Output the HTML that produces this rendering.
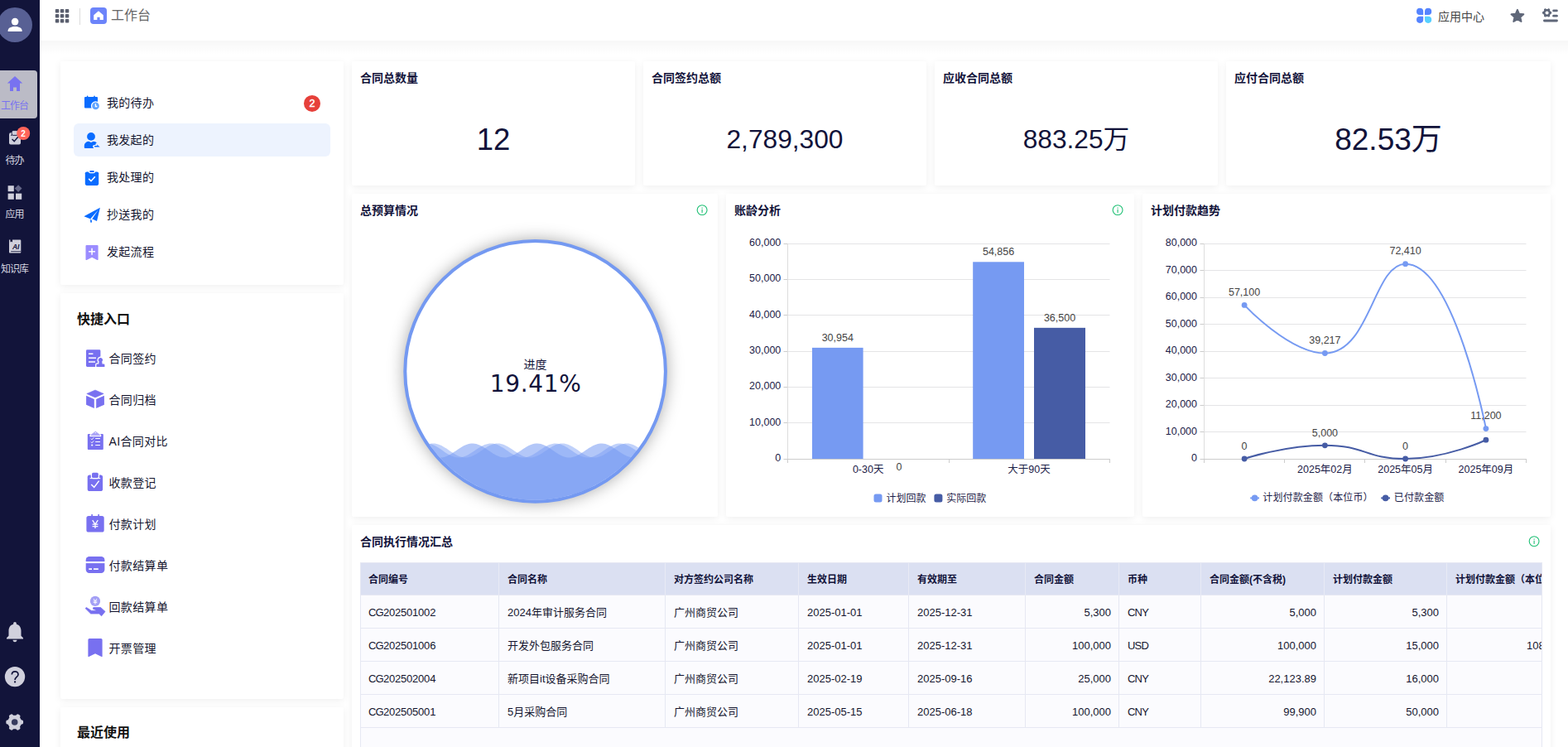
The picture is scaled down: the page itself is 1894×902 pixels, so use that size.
<!DOCTYPE html>
<html lang="zh-CN">
<head>
<meta charset="utf-8">
<title>工作台</title>
<style>
*{box-sizing:border-box;margin:0;padding:0}
html,body{width:1894px;height:902px;overflow:hidden}
body{background:#fff;font-family:"Liberation Sans","Noto Sans CJK SC",sans-serif;color:#12133a;font-size:14px;position:relative;-webkit-font-smoothing:antialiased}
.abs{position:absolute}
#side{position:absolute;left:0;top:0;width:48px;height:902px;background:#12143a;overflow:hidden;z-index:5}
#top{position:absolute;left:48px;top:0;width:1846px;height:49px;background:#fff;z-index:4}
#topsh{position:absolute;left:49px;top:49px;width:1845px;height:17px;background:linear-gradient(to bottom,rgba(0,0,0,.033),rgba(0,0,0,.014) 50%,rgba(0,0,0,0));z-index:3}
.card{position:absolute;background:#fff;border-radius:2px;box-shadow:0 2px 10px rgba(0,0,0,.068)}
.ct{position:absolute;left:10px;top:10px;font-size:14px;font-weight:bold;line-height:20px;color:#12133a;white-space:nowrap}
.big{position:absolute;left:0;right:0;text-align:center;white-space:nowrap;color:#12133a;line-height:40px}
.mi{position:absolute;left:16px;width:310px;height:40px;border-radius:6px;font-size:14px;line-height:40px;color:#14152e;white-space:nowrap}
.mi span{position:absolute;left:40px;top:0;letter-spacing:.3px}
.mi svg{position:absolute;overflow:visible}
.qi{position:absolute;left:30px;height:30px;font-size:14px;line-height:30px;color:#14152e;white-space:nowrap}
.qi span{position:absolute;left:28.5px;top:0;letter-spacing:.35px}
.qi svg{position:absolute;overflow:visible}
.h16{position:absolute;left:20px;font-size:16px;font-weight:bold;line-height:24px;color:#111;white-space:nowrap}
.sl{position:absolute;left:-12px;width:60px;text-align:center;font-size:12px;letter-spacing:-1px;line-height:14px;color:#d6d6e0;white-space:nowrap;text-indent:-1px}
svg{display:block}
svg text{font-family:"Liberation Sans","Noto Sans CJK SC",sans-serif}
.tbl{position:absolute;left:10px;top:45px;width:1428px;height:240px;background:#fbfbfe;overflow:hidden;border-left:1px solid #e6e8f3;border-right:1px solid #e6e8f3;border-top:1px solid #e6e8f3}
.th{position:absolute;top:0;height:39px;background:#dbe0f2;border-right:1px solid #e8eaf5;border-bottom:1px solid #e6e8f3;font-size:12px;font-weight:bold;line-height:38px;padding:1px 0 0 10px;color:#12133a;white-space:nowrap;overflow:hidden}
.td{position:absolute;height:40px;border-right:1px solid #e6e8f3;border-bottom:1px solid #e6e8f3;font-size:13px;line-height:39px;padding:1px 9px 0 10px;color:#14152e;white-space:nowrap;overflow:hidden}
.c0{padding-left:9px}
.td.c0{letter-spacing:-.2px}
.u{letter-spacing:-.8px}
.r{text-align:right}
</style>
</head>
<body>
<div id="side">
<svg class="abs" style="left:0;top:0" width="48" height="902" viewBox="0 0 48 902">
<circle cx="18" cy="30" r="21" fill="#586094"/>
<circle cx="18.1" cy="26.1" r="4.3" fill="#fff"/>
<path d="M9.6 38.1 V36.8 C9.6 33.6 14 32 18.1 32 C22.2 32 26.6 33.6 26.6 36.8 V38.1 Z" fill="#fff"/>
<path d="M0 85 H41 A4 4 0 0 1 45 89 V139 A4 4 0 0 1 41 143 H0 Z" fill="#bbbbc6"/>
<path d="M18 92 L27.2 100.6 H24 V110 H20 V105.6 H16 V110 H12 V100.6 H8.8 Z" fill="#7872f0"/>
<!-- todo -->
<rect x="11" y="160.2" width="14" height="14.4" rx="2" fill="#cdceda"/>
<rect x="14.3" y="157.8" width="7.4" height="5.6" rx="1.6" fill="#cdceda" stroke="#12143a" stroke-width="0.9"/>
<rect x="14.8" y="158.3" width="6.4" height="3.6" rx="1.2" fill="#cdceda"/>
<path d="M13 163.3 H14.6" stroke="#12143a" stroke-width="0.9" fill="none"/>
<path d="M14.6 168 L17.2 170.6 L21.8 165.2" stroke="#12143a" stroke-width="1.4" fill="none"/>
<circle cx="28.2" cy="161" r="8" fill="#ff6459"/>
<text x="28.1" y="164.6" font-size="10" font-weight="bold" fill="#fff" text-anchor="middle">2</text>
<!-- apps -->
<rect x="9.6" y="224.2" width="7.2" height="7" fill="#d0d0dc"/>
<rect x="9.6" y="233.6" width="7.2" height="7.2" fill="#d0d0dc"/>
<rect x="19" y="233.6" width="7.2" height="7.2" fill="#d0d0dc"/>
<path d="M22.1 223.2 L26.5 227.6 L22.1 232 L17.7 227.6 Z" fill="#646687"/>
<!-- knowledge -->
<path d="M11 289.6 H12.4 V292.6 L13.7 291.6 L15 292.6 V289.6 H24.4 A0.9 0.9 0 0 1 25.3 290.5 V304.6 A0.9 0.9 0 0 1 24.4 305.5 H11.9 A0.9 0.9 0 0 1 11 304.6 Z" fill="#d0d0dc"/>
<path d="M13.2 303.6 H25.3" stroke="#12143a" stroke-width="0.8" fill="none"/>
<text x="19.2" y="301.3" font-size="8.6" font-weight="bold" font-style="italic" fill="#12143a" text-anchor="middle">AI</text>
<!-- bell -->
<g transform="translate(3,747.8) scale(1.25)" fill="#d0d0dc"><path d="M12 22c1.1 0 2-.9 2-2h-4c0 1.1.89 2 2 2zm6-6v-5c0-3.07-1.64-5.64-4.5-6.32V4c0-.83-.67-1.5-1.5-1.5s-1.5.67-1.5 1.5v.68C7.63 5.36 6 7.92 6 11v5l-2 2v1h16v-1l-2-2z"/></g>
<!-- help -->
<circle cx="18" cy="817.1" r="12.2" fill="#d0d0dc"/>
<path d="M14.3 814.6 C14.3 809.6 22 809.6 22 814.4 C22 817.4 18.1 817.6 18.1 821" stroke="#12143a" stroke-width="1.7" fill="none"/>
<rect x="17.1" y="822.4" width="2" height="2" fill="#12143a"/>
<!-- gear -->
<path d="M28.10 872.00 L28.10 872.27 L28.08 872.54 L28.06 872.82 L28.03 873.09 L27.99 873.35 L27.92 873.62 L27.80 873.87 L27.60 874.10 L27.24 874.29 L26.73 874.42 L26.22 874.52 L25.86 874.65 L25.64 874.81 L25.50 874.99 L25.39 875.19 L25.29 875.38 L25.20 875.58 L25.10 875.77 L24.99 875.96 L24.89 876.15 L24.78 876.34 L24.66 876.52 L24.54 876.70 L24.42 876.89 L24.30 877.07 L24.19 877.26 L24.11 877.47 L24.08 877.74 L24.15 878.12 L24.31 878.61 L24.45 879.12 L24.47 879.52 L24.37 879.81 L24.21 880.04 L24.02 880.23 L23.81 880.40 L23.59 880.57 L23.36 880.72 L23.13 880.87 L22.90 881.01 L22.66 881.14 L22.42 881.26 L22.18 881.38 L21.93 881.49 L21.67 881.59 L21.41 881.66 L21.13 881.69 L20.83 881.62 L20.49 881.41 L20.12 881.03 L19.77 880.64 L19.48 880.39 L19.24 880.28 L19.01 880.25 L18.79 880.25 L18.57 880.27 L18.35 880.28 L18.13 880.29 L17.92 880.30 L17.70 880.30 L17.48 880.30 L17.27 880.29 L17.05 880.28 L16.83 880.27 L16.61 880.25 L16.39 880.25 L16.16 880.28 L15.92 880.39 L15.63 880.64 L15.28 881.03 L14.91 881.41 L14.57 881.62 L14.27 881.69 L13.99 881.66 L13.73 881.59 L13.47 881.49 L13.22 881.38 L12.98 881.26 L12.74 881.14 L12.50 881.01 L12.27 880.87 L12.04 880.72 L11.81 880.57 L11.59 880.40 L11.38 880.23 L11.19 880.04 L11.03 879.81 L10.93 879.52 L10.95 879.12 L11.09 878.61 L11.25 878.12 L11.32 877.74 L11.29 877.47 L11.21 877.26 L11.10 877.07 L10.98 876.89 L10.86 876.70 L10.74 876.52 L10.62 876.34 L10.51 876.15 L10.41 875.96 L10.30 875.77 L10.20 875.58 L10.11 875.38 L10.01 875.19 L9.90 874.99 L9.76 874.81 L9.54 874.65 L9.18 874.52 L8.67 874.42 L8.16 874.29 L7.80 874.10 L7.60 873.87 L7.48 873.62 L7.41 873.35 L7.37 873.09 L7.34 872.82 L7.32 872.54 L7.30 872.27 L7.30 872.00 L7.30 871.73 L7.32 871.46 L7.34 871.18 L7.37 870.91 L7.41 870.65 L7.48 870.38 L7.60 870.13 L7.80 869.90 L8.16 869.71 L8.67 869.58 L9.18 869.48 L9.54 869.35 L9.76 869.19 L9.90 869.01 L10.01 868.81 L10.11 868.62 L10.20 868.42 L10.30 868.23 L10.41 868.04 L10.51 867.85 L10.62 867.66 L10.74 867.48 L10.86 867.30 L10.98 867.11 L11.10 866.93 L11.21 866.74 L11.29 866.53 L11.32 866.26 L11.25 865.88 L11.09 865.39 L10.95 864.88 L10.93 864.48 L11.03 864.19 L11.19 863.96 L11.38 863.77 L11.59 863.60 L11.81 863.43 L12.04 863.28 L12.27 863.13 L12.50 862.99 L12.74 862.86 L12.98 862.74 L13.22 862.62 L13.47 862.51 L13.73 862.41 L13.99 862.34 L14.27 862.31 L14.57 862.38 L14.91 862.59 L15.28 862.97 L15.63 863.36 L15.92 863.61 L16.16 863.72 L16.39 863.75 L16.61 863.75 L16.83 863.73 L17.05 863.72 L17.27 863.71 L17.48 863.70 L17.70 863.70 L17.92 863.70 L18.13 863.71 L18.35 863.72 L18.57 863.73 L18.79 863.75 L19.01 863.75 L19.24 863.72 L19.48 863.61 L19.77 863.36 L20.12 862.97 L20.49 862.59 L20.83 862.38 L21.13 862.31 L21.41 862.34 L21.67 862.41 L21.93 862.51 L22.18 862.62 L22.42 862.74 L22.66 862.86 L22.90 862.99 L23.13 863.13 L23.36 863.28 L23.59 863.43 L23.81 863.60 L24.02 863.77 L24.21 863.96 L24.37 864.19 L24.47 864.48 L24.45 864.88 L24.31 865.39 L24.15 865.88 L24.08 866.26 L24.11 866.53 L24.19 866.74 L24.30 866.93 L24.42 867.11 L24.54 867.30 L24.66 867.48 L24.78 867.66 L24.89 867.85 L24.99 868.04 L25.10 868.23 L25.20 868.42 L25.29 868.62 L25.39 868.81 L25.50 869.01 L25.64 869.19 L25.86 869.35 L26.22 869.48 L26.73 869.58 L27.24 869.71 L27.60 869.90 L27.80 870.13 L27.92 870.38 L27.99 870.65 L28.03 870.91 L28.06 871.18 L28.08 871.46 L28.10 871.73 Z" fill="#d0d0dc"/><circle cx="17.70" cy="872.00" r="3.80" fill="#363a5e"/>
</svg>
<div class="sl" style="top:121px;color:#7872f0">工作台</div>
<div class="sl" style="top:187px">待办</div>
<div class="sl" style="top:252px">应用</div>
<div class="sl" style="top:318px">知识库</div>
</div>
<div id="top">
<svg class="abs" style="left:0;top:0" width="1846" height="49" viewBox="48 0 1846 49">
<g fill="#5a5f6e">
<rect x="66.8" y="11.0" width="4.5" height="4.4" rx="0.9"/><rect x="72.8" y="11.0" width="4.5" height="4.4" rx="0.9"/><rect x="78.8" y="11.0" width="4.5" height="4.4" rx="0.9"/>
<rect x="66.8" y="17.0" width="4.5" height="4.4" rx="0.9"/><rect x="72.8" y="17.0" width="4.5" height="4.4" rx="0.9"/><rect x="78.8" y="17.0" width="4.5" height="4.4" rx="0.9"/>
<rect x="66.8" y="23.0" width="4.5" height="4.4" rx="0.9"/><rect x="72.8" y="23.0" width="4.5" height="4.4" rx="0.9"/><rect x="78.8" y="23.0" width="4.5" height="4.4" rx="0.9"/>
</g>
<rect x="96" y="10" width="1" height="20" fill="#dcdcdc"/>
<rect x="109" y="9" width="20" height="20" rx="4" fill="#6c84fa"/>
<path d="M119 13.3 L124.8 18.3 V24 H120.6 V20.8 H117.4 V24 H113.2 V18.3 Z" fill="#fff"/>
<!-- app center -->
<path d="M1715.10 9.80 H1715.10 A4.10 4.10 0 0 1 1719.20 13.90 V17.40 A0.60 0.60 0 0 1 1718.60 18.00 H1715.10 A4.10 4.10 0 0 1 1711.00 13.90 V13.90 A4.10 4.10 0 0 1 1715.10 9.80 Z" fill="#5584ff"/>
<path d="M1725.10 9.80 H1725.10 A4.10 4.10 0 0 1 1729.20 13.90 V13.90 A4.10 4.10 0 0 1 1725.10 18.00 H1721.60 A0.60 0.60 0 0 1 1721.00 17.40 V13.90 A4.10 4.10 0 0 1 1725.10 9.80 Z" fill="#5584ff"/>
<path d="M1715.10 19.70 H1718.60 A0.60 0.60 0 0 1 1719.20 20.30 V23.80 A4.10 4.10 0 0 1 1715.10 27.90 H1715.10 A4.10 4.10 0 0 1 1711.00 23.80 V23.80 A4.10 4.10 0 0 1 1715.10 19.70 Z" fill="#5584ff"/>
<path d="M1721.60 19.70 H1725.10 A4.10 4.10 0 0 1 1729.20 23.80 V23.80 A4.10 4.10 0 0 1 1725.10 27.90 H1725.10 A4.10 4.10 0 0 1 1721.00 23.80 V20.30 A0.60 0.60 0 0 1 1721.60 19.70 Z" fill="#57d0ff"/>
<!-- star -->
<path d="M1832.90 11.90 L1835.02 16.79 L1840.32 17.29 L1836.32 20.81 L1837.48 26.01 L1832.90 23.30 L1828.32 26.01 L1829.48 20.81 L1825.48 17.29 L1830.78 16.79 Z" fill="#5f6779" stroke="#5f6779" stroke-width="2" stroke-linejoin="round"/>
<!-- settings list -->
<path d="M1874.20 15.40 L1874.20 15.55 L1874.19 15.69 L1874.18 15.84 L1874.16 15.98 L1874.14 16.13 L1874.10 16.27 L1874.04 16.41 L1873.93 16.53 L1873.75 16.64 L1873.48 16.71 L1873.21 16.77 L1873.02 16.84 L1872.90 16.92 L1872.83 17.02 L1872.77 17.13 L1872.72 17.23 L1872.66 17.34 L1872.61 17.44 L1872.55 17.55 L1872.50 17.65 L1872.44 17.75 L1872.37 17.85 L1872.31 17.95 L1872.25 18.05 L1872.18 18.15 L1872.12 18.25 L1872.07 18.36 L1872.05 18.51 L1872.09 18.71 L1872.17 18.97 L1872.24 19.24 L1872.25 19.45 L1872.19 19.61 L1872.11 19.73 L1872.00 19.83 L1871.89 19.93 L1871.77 20.01 L1871.65 20.10 L1871.53 20.17 L1871.40 20.25 L1871.27 20.32 L1871.14 20.39 L1871.01 20.45 L1870.88 20.51 L1870.74 20.56 L1870.60 20.60 L1870.45 20.62 L1870.29 20.59 L1870.10 20.47 L1869.91 20.28 L1869.72 20.08 L1869.57 19.95 L1869.43 19.89 L1869.31 19.87 L1869.19 19.87 L1869.07 19.88 L1868.95 19.89 L1868.84 19.89 L1868.72 19.90 L1868.60 19.90 L1868.48 19.90 L1868.36 19.89 L1868.25 19.89 L1868.13 19.88 L1868.01 19.87 L1867.89 19.87 L1867.77 19.89 L1867.63 19.95 L1867.48 20.08 L1867.29 20.28 L1867.10 20.47 L1866.91 20.59 L1866.75 20.62 L1866.60 20.60 L1866.46 20.56 L1866.32 20.51 L1866.19 20.45 L1866.06 20.39 L1865.93 20.32 L1865.80 20.25 L1865.67 20.17 L1865.55 20.10 L1865.43 20.01 L1865.31 19.93 L1865.20 19.83 L1865.09 19.73 L1865.01 19.61 L1864.95 19.45 L1864.96 19.24 L1865.03 18.97 L1865.11 18.71 L1865.15 18.51 L1865.13 18.36 L1865.08 18.25 L1865.02 18.15 L1864.95 18.05 L1864.89 17.95 L1864.83 17.85 L1864.76 17.75 L1864.70 17.65 L1864.65 17.55 L1864.59 17.44 L1864.54 17.34 L1864.48 17.23 L1864.43 17.13 L1864.37 17.02 L1864.30 16.92 L1864.18 16.84 L1863.99 16.77 L1863.72 16.71 L1863.45 16.64 L1863.27 16.53 L1863.16 16.41 L1863.10 16.27 L1863.06 16.13 L1863.04 15.98 L1863.02 15.84 L1863.01 15.69 L1863.00 15.55 L1863.00 15.40 L1863.00 15.25 L1863.01 15.11 L1863.02 14.96 L1863.04 14.82 L1863.06 14.67 L1863.10 14.53 L1863.16 14.39 L1863.27 14.27 L1863.45 14.16 L1863.72 14.09 L1863.99 14.03 L1864.18 13.96 L1864.30 13.88 L1864.37 13.78 L1864.43 13.67 L1864.48 13.57 L1864.54 13.46 L1864.59 13.36 L1864.65 13.25 L1864.70 13.15 L1864.76 13.05 L1864.83 12.95 L1864.89 12.85 L1864.95 12.75 L1865.02 12.65 L1865.08 12.55 L1865.13 12.44 L1865.15 12.29 L1865.11 12.09 L1865.03 11.83 L1864.96 11.56 L1864.95 11.35 L1865.01 11.19 L1865.09 11.07 L1865.20 10.97 L1865.31 10.87 L1865.43 10.79 L1865.55 10.70 L1865.67 10.63 L1865.80 10.55 L1865.93 10.48 L1866.06 10.41 L1866.19 10.35 L1866.32 10.29 L1866.46 10.24 L1866.60 10.20 L1866.75 10.18 L1866.91 10.21 L1867.10 10.33 L1867.29 10.52 L1867.48 10.72 L1867.63 10.85 L1867.77 10.91 L1867.89 10.93 L1868.01 10.93 L1868.13 10.92 L1868.25 10.91 L1868.36 10.91 L1868.48 10.90 L1868.60 10.90 L1868.72 10.90 L1868.84 10.91 L1868.95 10.91 L1869.07 10.92 L1869.19 10.93 L1869.31 10.93 L1869.43 10.91 L1869.57 10.85 L1869.72 10.72 L1869.91 10.52 L1870.10 10.33 L1870.29 10.21 L1870.45 10.18 L1870.60 10.20 L1870.74 10.24 L1870.88 10.29 L1871.01 10.35 L1871.14 10.41 L1871.27 10.48 L1871.40 10.55 L1871.53 10.63 L1871.65 10.70 L1871.77 10.79 L1871.89 10.87 L1872.00 10.97 L1872.11 11.07 L1872.19 11.19 L1872.25 11.35 L1872.24 11.56 L1872.17 11.83 L1872.09 12.09 L1872.05 12.29 L1872.07 12.44 L1872.12 12.55 L1872.18 12.65 L1872.25 12.75 L1872.31 12.85 L1872.37 12.95 L1872.44 13.05 L1872.50 13.15 L1872.55 13.25 L1872.61 13.36 L1872.66 13.46 L1872.72 13.57 L1872.77 13.67 L1872.83 13.78 L1872.90 13.88 L1873.02 13.96 L1873.21 14.03 L1873.48 14.09 L1873.75 14.16 L1873.93 14.27 L1874.04 14.39 L1874.10 14.53 L1874.14 14.67 L1874.16 14.82 L1874.18 14.96 L1874.19 15.11 L1874.20 15.25 Z" fill="#5f6779"/><circle cx="1868.60" cy="15.40" r="2.00" fill="#fff"/>
<g stroke="#5f6779" stroke-width="2.8" stroke-linecap="round" fill="none">
<path d="M1876.6 12.9 H1880.4"/><path d="M1876.6 19.2 H1880.4"/><path d="M1865.4 25 H1880.5"/>
</g>
</svg>
<div class="abs" style="left:86px;top:7px;font-size:16px;line-height:24px;color:#666;white-space:nowrap">工作台</div>
<div class="abs" style="left:1689px;top:8px;font-size:14px;line-height:24px;color:#444;white-space:nowrap">应用中心</div>
</div>
<div id="topsh"></div>
<div class="card" style="left:73px;top:74px;width:342px;height:270px">
<div class="mi" style="top:30px"><span>我的待办</span></div>
<div class="mi" style="top:75px;background:#edf3fe"><span>我发起的</span></div>
<div class="mi" style="top:120px"><span>我处理的</span></div>
<div class="mi" style="top:165px"><span>抄送我的</span></div>
<div class="mi" style="top:210px"><span>发起流程</span></div>
<svg class="abs" style="left:0;top:0" width="342" height="270" viewBox="73 74 342 270">
<!-- m1 calendar clock -->
<path d="M103 117 H104.8 V116.4 A0.8 0.8 0 0 1 106.4 116.4 V117 H113.2 V116.4 A0.8 0.8 0 0 1 114.8 116.4 V117 H117 A1 1 0 0 1 118 118 V129.6 A1 1 0 0 1 117 130.6 H103 A1 1 0 0 1 102 129.6 V118 A1 1 0 0 1 103 117 Z" fill="#0a6cff"/>
<circle cx="115.5" cy="127.9" r="5.6" fill="#fff"/>
<circle cx="115.5" cy="127.9" r="4.3" fill="#5ea3ff"/>
<path d="M115.4 125.3 V128.5 H117.4" stroke="#fff" stroke-width="1.3" fill="none"/>
<circle cx="377" cy="124.9" r="10" fill="#e6403a"/>
<text x="377" y="129.3" font-size="12.5" fill="#fff" stroke="#fff" stroke-width="0.45" text-anchor="middle">2</text>
<!-- m2 person arrow -->
<circle cx="110" cy="164.9" r="4.9" fill="#0a6cff"/>
<path d="M101.8 178 V176.4 C101.8 172.6 104.6 170.8 107.4 170.8 L110 171.9 L112.6 170.8 C115.6 170.8 117.3 172.3 118 174 L113 178 V179 H102.8 A1 1 0 0 1 101.8 178 Z" fill="#0a6cff"/>
<path d="M113.8 176.7 H119.6 L117.2 174.2" stroke="#edf3fe" stroke-width="3.6" fill="none" stroke-linejoin="round" stroke-linecap="round"/>
<path d="M114.2 176.1 H117.6 L116.6 173.9 L120.7 177.4 H114.2 Z" fill="#0a6cff"/>
<!-- m3 clipboard check -->
<rect x="102.8" y="207.5" width="16.4" height="16.4" rx="1.8" fill="#0a6cff"/>
<rect x="107" y="205" width="8" height="4.3" rx="2" fill="#fff"/>
<rect x="108.2" y="206.1" width="5.6" height="2" rx="1" fill="#0a6cff"/>
<path d="M107.2 215.9 L110 218.7 L114.8 213.2" stroke="#fff" stroke-width="1.6" fill="none"/>
<!-- m4 plane -->
<path d="M101.4 261.2 L120.9 250.7 L117 266.9 L111.2 264.3 L110.6 268.6 L109.4 268.4 L109 264.2 Z" fill="#0a6cff"/>
<path d="M118.6 253.6 L109.2 264.2 L110.2 266.6 L111.2 264.4 Z" fill="#fff"/>
<path d="M109.6 266.2 L110.8 266.6 L110.5 268.7 L109.5 268.5 Z" fill="#0a6cff"/>
<!-- m5 bookmark plus -->
<path d="M104.5 296 H117.6 A1 1 0 0 1 118.6 297 V313.2 A0.8 0.8 0 0 1 117.4 313.9 L111.05 310.8 L104.7 313.9 A0.8 0.8 0 0 1 103.5 313.2 V297 A1 1 0 0 1 104.5 296 Z" fill="#9b8cff"/>
<path d="M107.1 303.7 H115 M111.05 299.8 V307.7" stroke="#fff" stroke-width="1.5" fill="none"/>
</svg>
</div>
<div class="card" style="left:73px;top:354px;width:342px;height:490px">
<div class="h16" style="top:20px">快捷入口</div>
<div class="qi" style="top:64px"><span>合同签约</span></div>
<div class="qi" style="top:114px"><span>合同归档</span></div>
<div class="qi" style="top:164px"><span>AI合同对比</span></div>
<div class="qi" style="top:214px"><span>收款登记</span></div>
<div class="qi" style="top:264px"><span>付款计划</span></div>
<div class="qi" style="top:314px"><span>付款结算单</span></div>
<div class="qi" style="top:364px"><span>回款结算单</span></div>
<div class="qi" style="top:414px"><span>开票管理</span></div>
<svg class="abs" style="left:0;top:0" width="342" height="490" viewBox="73 354 342 490">
<g fill="#7870f0">
<!-- q1 -->
<rect x="104" y="422.3" width="17.4" height="20.7" rx="1.4"/>
<path d="M107 427.3 H112.4 M107 432.2 H116 M107 437 H115" stroke="#fff" stroke-width="1.5" fill="none"/>
<path d="M121.4 431.9 A2.7 2.7 0 0 1 123.2 436.6 L123.6 439.6 H125.4 A1 1 0 0 1 126.4 440.6 V443 H116.4 V440.6 A1 1 0 0 1 117.4 439.6 H119.2 L119.6 436.6 A2.7 2.7 0 0 1 121.4 431.9 Z" stroke="#fff" stroke-width="2.6" stroke-linejoin="round"/>
<path d="M121.4 431.9 A2.7 2.7 0 0 1 123.2 436.6 L123.6 439.6 H125.4 A1 1 0 0 1 126.4 440.6 V443 H116.4 V440.6 A1 1 0 0 1 117.4 439.6 H119.2 L119.6 436.6 A2.7 2.7 0 0 1 121.4 431.9 Z"/>
<!-- q2 cube -->
<path d="M115 471 L125.2 475.4 L115 479.9 L104.8 475.4 Z" stroke="#7870f0" stroke-width="0.6" stroke-linejoin="round"/>
<path d="M104.1 477.7 L113.8 482 V493.1 L104.1 488.7 Z"/>
<path d="M125.9 477.7 L116.2 482 V493.1 L125.9 488.7 Z"/>
<!-- q3 clipboard list -->
<rect x="105.8" y="524" width="19" height="19" rx="1"/>
<path d="M115.3 520.4 L121.6 525.2 V526.6 H109 V525.2 Z" fill="#fff" stroke="#fff" stroke-width="1.2"/>
<path d="M115.3 521 L120.6 525 V525.8 H110 V525 Z" fill="#a9a3f6" stroke="#a9a3f6" stroke-width="0.6" stroke-linejoin="round"/>
<circle cx="115.3" cy="522.6" r="0.7" fill="#fff"/>
<path d="M115.2 529.5 H121 M115.2 533.5 H121 M115.2 537.5 H121" stroke="#fff" stroke-width="1.2" fill="none"/>
<path d="M109.8 529.6 L111 530.8 L113.2 528.4 M109.8 533.6 L111 534.8 L113.2 532.4" stroke="#fff" stroke-width="1" fill="none"/>
<circle cx="111.2" cy="537.5" r="1.1" fill="#fff"/>
<!-- q4 clipboard check -->
<rect x="105.7" y="573.6" width="18.4" height="19.5" rx="2.6"/>
<rect x="109.8" y="569.6" width="10.2" height="8.7" rx="2.4" fill="#fff"/>
<rect x="111" y="570.7" width="7.8" height="6.4" rx="1.6"/>
<path d="M108.6 577.6 H121.2" stroke="#fff" stroke-width="1.1" fill="none"/>
<path d="M110.2 585 L113.7 588.4 L119.6 580.6" stroke="#fff" stroke-width="1.5" fill="none"/>
<!-- q5 calendar yen -->
<rect x="104.4" y="623" width="21.3" height="19.5" rx="2.6"/>
<rect x="110.3" y="621" width="1.6" height="3"/><rect x="118.3" y="621" width="1.6" height="3"/>
<path d="M111.7 628.2 L115 633 L118.3 628.2 M111.6 633.2 H118.4 M111.6 635.6 H118.4 M115 633 V638" stroke="#fff" stroke-width="1.3" fill="none"/>
<!-- q6 card -->
<rect x="103.7" y="672" width="22.7" height="20" rx="4.2"/>
<rect x="103" y="678" width="24" height="2.1" fill="#fff"/>
<path d="M107.3 687.1 H111 M113 687.1 H118.8" stroke="#fff" stroke-width="1.7" fill="none"/>
<!-- q7 hand coin -->
<circle cx="115" cy="725.9" r="6.1" fill="#a39ff5"/>
<path d="M113 723 L115 725.8 L117 723 M112.7 725.9 H117.3 M112.7 727.6 H117.3 M115 725.8 V729.6" stroke="#fff" stroke-width="0.9" fill="none"/>
<path d="M103.1 734.6 L104.4 733.6 L110.4 737.4 H115.4 L115.8 736.5 L112.4 735.2 L112.8 733.6 H121.6 L127 738.4 L122.6 743.8 L119.6 741 H109.6 Z" stroke="#7870f0" stroke-width="0.8" stroke-linejoin="round"/>
<!-- q8 bookmark -->
<path d="M108 771 H122 A1.6 1.6 0 0 1 123.6 772.6 V792.4 A0.6 0.6 0 0 1 122.7 792.9 L115 789.2 L107.3 792.9 A0.6 0.6 0 0 1 106.4 792.4 V772.6 A1.6 1.6 0 0 1 108 771 Z"/>
</g>
</svg>
</div>
<div class="card" style="left:73px;top:854px;width:342px;height:60px">
<div class="h16" style="top:19px">最近使用</div>
</div>
<div class="card" style="left:425px;top:74px;width:342px;height:150px"><div class="ct">合同总数量</div><div class="big" style="top:75px;font-size:36.5px">12</div></div>
<div class="card" style="left:777px;top:74px;width:342px;height:150px"><div class="ct">合同签约总额</div><div class="big" style="top:74px;font-size:31.7px">2,789,300</div></div>
<div class="card" style="left:1129px;top:74px;width:342px;height:150px"><div class="ct">应收合同总额</div><div class="big" style="top:74px;font-size:31.7px">883.25万</div></div>
<div class="card" style="left:1481px;top:74px;width:392px;height:150px"><div class="ct">应付合同总额</div><div class="big" style="top:75px;font-size:37px">82.53万</div></div>
<div class="card" style="left:425px;top:234px;width:442px;height:390px"><div class="ct">总预算情况</div><svg class="abs" style="left:0;top:0" width="442" height="390" viewBox="425 234 442 390"><defs><filter id="lsh" x="-30%" y="-30%" width="160%" height="160%"><feGaussianBlur stdDeviation="10"/></filter><clipPath id="lcp"><circle cx="646.6" cy="448.4" r="155.3"/></clipPath></defs><circle cx="646.6" cy="448.4" r="158.3" fill="#000" fill-opacity="0.36" filter="url(#lsh)"/><circle cx="646.6" cy="448.4" r="158.3" fill="#fff"/><g clip-path="url(#lcp)"><path d="M489.3 548.2 L491.3 546.9 L493.3 545.6 L495.3 544.2 L497.3 542.9 L499.3 541.5 L501.3 540.2 L503.3 539.1 L505.3 538.0 L507.3 537.1 L509.3 536.4 L511.3 535.9 L513.3 535.6 L515.3 535.5 L517.3 535.6 L519.3 536.0 L521.3 536.5 L523.3 537.3 L525.3 538.2 L527.3 539.3 L529.3 540.5 L531.3 541.8 L533.3 543.1 L535.3 544.5 L537.3 545.9 L539.3 547.2 L541.3 548.4 L543.3 549.5 L545.3 550.5 L547.3 551.3 L549.3 551.9 L551.3 552.3 L553.3 552.5 L555.3 552.5 L557.3 552.2 L559.3 551.7 L561.3 551.1 L563.3 550.2 L565.3 549.2 L567.3 548.1 L569.3 546.8 L571.3 545.5 L573.3 544.2 L575.3 542.8 L577.3 541.5 L579.3 540.2 L581.3 539.0 L583.3 538.0 L585.3 537.1 L587.3 536.4 L589.3 535.9 L591.3 535.6 L593.3 535.5 L595.3 535.6 L597.3 536.0 L599.3 536.6 L601.3 537.3 L603.3 538.3 L605.3 539.4 L607.3 540.6 L609.3 541.8 L611.3 543.2 L613.3 544.6 L615.3 545.9 L617.3 547.2 L619.3 548.4 L621.3 549.6 L623.3 550.5 L625.3 551.3 L627.3 551.9 L629.3 552.3 L631.3 552.5 L633.3 552.4 L635.3 552.2 L637.3 551.7 L639.3 551.0 L641.3 550.2 L643.3 549.2 L645.3 548.0 L647.3 546.8 L649.3 545.4 L651.3 544.1 L653.3 542.7 L655.3 541.4 L657.3 540.1 L659.3 539.0 L661.3 537.9 L663.3 537.0 L665.3 536.4 L667.3 535.9 L669.3 535.6 L671.3 535.5 L673.3 535.7 L675.3 536.0 L677.3 536.6 L679.3 537.4 L681.3 538.3 L683.3 539.4 L685.3 540.6 L687.3 541.9 L689.3 543.3 L691.3 544.6 L693.3 546.0 L695.3 547.3 L697.3 548.5 L699.3 549.6 L701.3 550.6 L703.3 551.3 L705.3 551.9 L707.3 552.3 L709.3 552.5 L711.3 552.4 L713.3 552.2 L715.3 551.7 L717.3 551.0 L719.3 550.1 L721.3 549.1 L723.3 548.0 L725.3 546.7 L727.3 545.4 L729.3 544.0 L731.3 542.7 L733.3 541.3 L735.3 540.1 L737.3 538.9 L739.3 537.9 L741.3 537.0 L743.3 536.3 L745.3 535.8 L747.3 535.6 L749.3 535.5 L751.3 535.7 L753.3 536.1 L755.3 536.6 L757.3 537.4 L759.3 538.4 L761.3 539.5 L763.3 540.7 L765.3 542.0 L767.3 543.3 L769.3 544.7 L771.3 546.1 L773.3 547.4 L775.3 548.6 L777.3 549.7 L779.3 550.6 L781.3 551.4 L783.3 552.0 L785.3 552.3 L787.3 552.5 L789.3 552.4 L791.3 552.2 L793.3 551.7 L795.3 551.0 L797.3 550.1 L799.3 549.1 L801.3 547.9 L803.3 546.6 L803.9 854.6 L489.3 854.6 Z" fill="#7499f3" fill-opacity="0.45"/><path d="M489.3 551.8 L491.3 551.2 L493.3 550.4 L495.3 549.4 L497.3 548.3 L499.3 547.0 L501.3 545.7 L503.3 544.4 L505.3 543.0 L507.3 541.6 L509.3 540.4 L511.3 539.2 L513.3 538.1 L515.3 537.2 L517.3 536.5 L519.3 535.9 L521.3 535.6 L523.3 535.5 L525.3 535.6 L527.3 535.9 L529.3 536.5 L531.3 537.2 L533.3 538.1 L535.3 539.2 L537.3 540.4 L539.3 541.6 L541.3 543.0 L543.3 544.4 L545.3 545.7 L547.3 547.0 L549.3 548.3 L551.3 549.4 L553.3 550.4 L555.3 551.2 L557.3 551.8 L559.3 552.3 L561.3 552.5 L563.3 552.5 L565.3 552.2 L567.3 551.8 L569.3 551.2 L571.3 550.3 L573.3 549.3 L575.3 548.2 L577.3 547.0 L579.3 545.7 L581.3 544.3 L583.3 542.9 L585.3 541.6 L587.3 540.3 L589.3 539.1 L591.3 538.1 L593.3 537.2 L595.3 536.4 L597.3 535.9 L599.3 535.6 L601.3 535.5 L603.3 535.6 L605.3 536.0 L607.3 536.5 L609.3 537.3 L611.3 538.2 L613.3 539.2 L615.3 540.4 L617.3 541.7 L619.3 543.1 L621.3 544.4 L623.3 545.8 L625.3 547.1 L627.3 548.3 L629.3 549.4 L631.3 550.4 L633.3 551.2 L635.3 551.9 L637.3 552.3 L639.3 552.5 L641.3 552.5 L643.3 552.2 L645.3 551.8 L647.3 551.1 L649.3 550.3 L651.3 549.3 L653.3 548.2 L655.3 546.9 L657.3 545.6 L659.3 544.2 L661.3 542.9 L663.3 541.5 L665.3 540.2 L667.3 539.1 L669.3 538.0 L671.3 537.1 L673.3 536.4 L675.3 535.9 L677.3 535.6 L679.3 535.5 L681.3 535.6 L683.3 536.0 L685.3 536.5 L687.3 537.3 L689.3 538.2 L691.3 539.3 L693.3 540.5 L695.3 541.8 L697.3 543.1 L699.3 544.5 L701.3 545.9 L703.3 547.2 L705.3 548.4 L707.3 549.5 L709.3 550.5 L711.3 551.3 L713.3 551.9 L715.3 552.3 L717.3 552.5 L719.3 552.5 L721.3 552.2 L723.3 551.7 L725.3 551.1 L727.3 550.2 L729.3 549.2 L731.3 548.1 L733.3 546.8 L735.3 545.5 L737.3 544.2 L739.3 542.8 L741.3 541.5 L743.3 540.2 L745.3 539.0 L747.3 538.0 L749.3 537.1 L751.3 536.4 L753.3 535.9 L755.3 535.6 L757.3 535.5 L759.3 535.6 L761.3 536.0 L763.3 536.6 L765.3 537.3 L767.3 538.3 L769.3 539.4 L771.3 540.6 L773.3 541.8 L775.3 543.2 L777.3 544.6 L779.3 545.9 L781.3 547.2 L783.3 548.4 L785.3 549.6 L787.3 550.5 L789.3 551.3 L791.3 551.9 L793.3 552.3 L795.3 552.5 L797.3 552.4 L799.3 552.2 L801.3 551.7 L803.3 551.0 L803.9 854.6 L489.3 854.6 Z" fill="#7499f3" fill-opacity="0.45"/><path d="M489.3 535.8 L491.3 535.6 L493.3 535.5 L495.3 535.7 L497.3 536.1 L499.3 536.6 L501.3 537.4 L503.3 538.4 L505.3 539.5 L507.3 540.7 L509.3 542.0 L511.3 543.3 L513.3 544.7 L515.3 546.1 L517.3 547.4 L519.3 548.6 L521.3 549.7 L523.3 550.6 L525.3 551.4 L527.3 552.0 L529.3 552.3 L531.3 552.5 L533.3 552.4 L535.3 552.2 L537.3 551.7 L539.3 551.0 L541.3 550.1 L543.3 549.1 L545.3 547.9 L547.3 546.6 L549.3 545.3 L551.3 543.9 L553.3 542.6 L555.3 541.3 L557.3 540.0 L559.3 538.8 L561.3 537.8 L563.3 537.0 L565.3 536.3 L567.3 535.8 L569.3 535.6 L571.3 535.5 L573.3 535.7 L575.3 536.1 L577.3 536.7 L579.3 537.5 L581.3 538.4 L583.3 539.5 L585.3 540.7 L587.3 542.0 L589.3 543.4 L591.3 544.8 L593.3 546.1 L595.3 547.4 L597.3 548.6 L599.3 549.7 L601.3 550.6 L603.3 551.4 L605.3 552.0 L607.3 552.3 L609.3 552.5 L611.3 552.4 L613.3 552.1 L615.3 551.6 L617.3 550.9 L619.3 550.1 L621.3 549.0 L623.3 547.8 L625.3 546.6 L627.3 545.2 L629.3 543.9 L631.3 542.5 L633.3 541.2 L635.3 539.9 L637.3 538.8 L639.3 537.8 L641.3 536.9 L643.3 536.3 L645.3 535.8 L647.3 535.5 L649.3 535.5 L651.3 535.7 L653.3 536.1 L655.3 536.7 L657.3 537.5 L659.3 538.5 L661.3 539.6 L663.3 540.8 L665.3 542.1 L667.3 543.5 L669.3 544.8 L671.3 546.2 L673.3 547.5 L675.3 548.7 L677.3 549.8 L679.3 550.7 L681.3 551.4 L683.3 552.0 L685.3 552.4 L687.3 552.5 L689.3 552.4 L691.3 552.1 L693.3 551.6 L695.3 550.9 L697.3 550.0 L699.3 549.0 L701.3 547.8 L703.3 546.5 L705.3 545.2 L707.3 543.8 L709.3 542.4 L711.3 541.1 L713.3 539.9 L715.3 538.7 L717.3 537.7 L719.3 536.9 L721.3 536.2 L723.3 535.8 L725.3 535.5 L727.3 535.5 L729.3 535.7 L731.3 536.1 L733.3 536.7 L735.3 537.6 L737.3 538.5 L739.3 539.6 L741.3 540.9 L743.3 542.2 L745.3 543.5 L747.3 544.9 L749.3 546.3 L751.3 547.5 L753.3 548.7 L755.3 549.8 L757.3 550.7 L759.3 551.5 L761.3 552.0 L763.3 552.4 L765.3 552.5 L767.3 552.4 L769.3 552.1 L771.3 551.6 L773.3 550.9 L775.3 550.0 L777.3 548.9 L779.3 547.7 L781.3 546.4 L783.3 545.1 L785.3 543.7 L787.3 542.4 L789.3 541.1 L791.3 539.8 L793.3 538.7 L795.3 537.7 L797.3 536.9 L799.3 536.2 L801.3 535.8 L803.3 535.5 L803.9 854.6 L489.3 854.6 Z" fill="#7499f3" fill-opacity="0.55"/></g><circle cx="646.6" cy="448.4" r="157.30" fill="none" stroke="#7499f1" stroke-width="4.0"/><text x="646.5" y="445.0" font-size="14" fill="#12133a" text-anchor="middle">进度</text><text x="647.2" y="472.9" font-size="28" letter-spacing="0.7" fill="#12133a" text-anchor="middle" style="font-family:'DejaVu Sans','Liberation Sans',sans-serif">19.41%</text><circle cx="848.1" cy="253.6" r="5.9" fill="none" stroke="#1dbf73" stroke-width="1.1"/><rect x="847.55" y="250.50" width="1.1" height="1.2" fill="#1dbf73"/><rect x="847.55" y="252.70" width="1.1" height="4.2" fill="#1dbf73"/></svg></div>
<div class="card" style="left:877px;top:234px;width:493px;height:390px"><div class="ct">账龄分析</div><svg class="abs" style="left:0;top:0" width="493" height="390" viewBox="877 234 493 390"><path d="M951.5 294.50 H1340.5" stroke="#e4e4e6" stroke-width="1" fill="none"/><path d="M946.5 294.50 H951.5" stroke="#cccccc" stroke-width="1" fill="none"/><text x="943.3" y="297.0" font-size="12.5" fill="#1c2148" text-anchor="end">60,000</text><path d="M951.5 337.50 H1340.5" stroke="#e4e4e6" stroke-width="1" fill="none"/><path d="M946.5 337.50 H951.5" stroke="#cccccc" stroke-width="1" fill="none"/><text x="943.3" y="340.3" font-size="12.5" fill="#1c2148" text-anchor="end">50,000</text><path d="M951.5 380.50 H1340.5" stroke="#e4e4e6" stroke-width="1" fill="none"/><path d="M946.5 380.50 H951.5" stroke="#cccccc" stroke-width="1" fill="none"/><text x="943.3" y="383.7" font-size="12.5" fill="#1c2148" text-anchor="end">40,000</text><path d="M951.5 424.50 H1340.5" stroke="#e4e4e6" stroke-width="1" fill="none"/><path d="M946.5 424.50 H951.5" stroke="#cccccc" stroke-width="1" fill="none"/><text x="943.3" y="427.0" font-size="12.5" fill="#1c2148" text-anchor="end">30,000</text><path d="M951.5 467.50 H1340.5" stroke="#e4e4e6" stroke-width="1" fill="none"/><path d="M946.5 467.50 H951.5" stroke="#cccccc" stroke-width="1" fill="none"/><text x="943.3" y="470.3" font-size="12.5" fill="#1c2148" text-anchor="end">20,000</text><path d="M951.5 510.50 H1340.5" stroke="#e4e4e6" stroke-width="1" fill="none"/><path d="M946.5 510.50 H951.5" stroke="#cccccc" stroke-width="1" fill="none"/><text x="943.3" y="513.7" font-size="12.5" fill="#1c2148" text-anchor="end">10,000</text><path d="M946.5 554.50 H951.5" stroke="#cccccc" stroke-width="1" fill="none"/><text x="943.3" y="557.0" font-size="12.5" fill="#1c2148" text-anchor="end">0</text><path d="M951.5 294.0 V555.0" stroke="#dddddd" stroke-width="1" fill="none"/><rect x="981.0" y="419.87" width="61.6" height="134.13" fill="#769af2"/><text x="1011.8" y="411.9" font-size="12.5" fill="#444444" text-anchor="middle">30,954</text><rect x="1175.2" y="316.29" width="61.8" height="237.71" fill="#769af2"/><text x="1206.1" y="308.3" font-size="12.5" fill="#444444" text-anchor="middle">54,856</text><rect x="1249.0" y="395.83" width="62.0" height="158.17" fill="#465ca5"/><text x="1280.0" y="387.8" font-size="12.5" fill="#444444" text-anchor="middle">36,500</text><path d="M951.0 554.5 H1341.0" stroke="#cccccc" stroke-width="1" fill="none"/><path d="M951.5 554.5 V559.0" stroke="#cccccc" stroke-width="1" fill="none"/><path d="M1146.5 554.5 V559.0" stroke="#cccccc" stroke-width="1" fill="none"/><path d="M1340.5 554.5 V559.0" stroke="#cccccc" stroke-width="1" fill="none"/><text x="1086.0" y="567.7" font-size="12.5" fill="#444444" text-anchor="middle">0</text><text x="1048.7" y="571.1" font-size="12.5" fill="#1c2148" text-anchor="middle">0-30天</text><text x="1243.0" y="571.1" font-size="12.5" fill="#1c2148" text-anchor="middle">大于90天</text><rect x="1055.5" y="596.6" width="10" height="10" rx="2.5" fill="#769af2"/><text x="1070.4" y="605.7" font-size="12" fill="#1c2148" text-anchor="start">计划回款</text><rect x="1128.4" y="596.6" width="10" height="10" rx="2.5" fill="#465ca5"/><text x="1143.3" y="605.7" font-size="12" fill="#1c2148" text-anchor="start">实际回款</text><circle cx="1350.1" cy="253.6" r="5.9" fill="none" stroke="#1dbf73" stroke-width="1.1"/><rect x="1349.55" y="250.50" width="1.1" height="1.2" fill="#1dbf73"/><rect x="1349.55" y="252.70" width="1.1" height="4.2" fill="#1dbf73"/></svg></div>
<div class="card" style="left:1380px;top:234px;width:493px;height:390px"><div class="ct">计划付款趋势</div><svg class="abs" style="left:0;top:0" width="493" height="390" viewBox="1380 234 493 390"><path d="M1454.5 294.50 H1843.5" stroke="#e4e4e6" stroke-width="1" fill="none"/><path d="M1449.5 294.50 H1454.5" stroke="#cccccc" stroke-width="1" fill="none"/><text x="1446.0" y="297.0" font-size="12.5" fill="#1c2148" text-anchor="end">80,000</text><path d="M1454.5 326.50 H1843.5" stroke="#e4e4e6" stroke-width="1" fill="none"/><path d="M1449.5 326.50 H1454.5" stroke="#cccccc" stroke-width="1" fill="none"/><text x="1446.0" y="329.5" font-size="12.5" fill="#1c2148" text-anchor="end">70,000</text><path d="M1454.5 359.50 H1843.5" stroke="#e4e4e6" stroke-width="1" fill="none"/><path d="M1449.5 359.50 H1454.5" stroke="#cccccc" stroke-width="1" fill="none"/><text x="1446.0" y="362.0" font-size="12.5" fill="#1c2148" text-anchor="end">60,000</text><path d="M1454.5 391.50 H1843.5" stroke="#e4e4e6" stroke-width="1" fill="none"/><path d="M1449.5 391.50 H1454.5" stroke="#cccccc" stroke-width="1" fill="none"/><text x="1446.0" y="394.5" font-size="12.5" fill="#1c2148" text-anchor="end">50,000</text><path d="M1454.5 424.50 H1843.5" stroke="#e4e4e6" stroke-width="1" fill="none"/><path d="M1449.5 424.50 H1454.5" stroke="#cccccc" stroke-width="1" fill="none"/><text x="1446.0" y="427.0" font-size="12.5" fill="#1c2148" text-anchor="end">40,000</text><path d="M1454.5 456.50 H1843.5" stroke="#e4e4e6" stroke-width="1" fill="none"/><path d="M1449.5 456.50 H1454.5" stroke="#cccccc" stroke-width="1" fill="none"/><text x="1446.0" y="459.5" font-size="12.5" fill="#1c2148" text-anchor="end">30,000</text><path d="M1454.5 489.50 H1843.5" stroke="#e4e4e6" stroke-width="1" fill="none"/><path d="M1449.5 489.50 H1454.5" stroke="#cccccc" stroke-width="1" fill="none"/><text x="1446.0" y="492.0" font-size="12.5" fill="#1c2148" text-anchor="end">20,000</text><path d="M1454.5 521.50 H1843.5" stroke="#e4e4e6" stroke-width="1" fill="none"/><path d="M1449.5 521.50 H1454.5" stroke="#cccccc" stroke-width="1" fill="none"/><text x="1446.0" y="524.5" font-size="12.5" fill="#1c2148" text-anchor="end">10,000</text><path d="M1449.5 554.50 H1454.5" stroke="#cccccc" stroke-width="1" fill="none"/><text x="1446.0" y="557.0" font-size="12.5" fill="#1c2148" text-anchor="end">0</text><path d="M1454.5 294.0 V555.0" stroke="#dddddd" stroke-width="1" fill="none"/><path d="M1454.0 554.5 H1844.0" stroke="#cccccc" stroke-width="1" fill="none"/><path d="M1454.5 554.5 V559.0" stroke="#cccccc" stroke-width="1" fill="none"/><path d="M1551.5 554.5 V559.0" stroke="#cccccc" stroke-width="1" fill="none"/><path d="M1648.5 554.5 V559.0" stroke="#cccccc" stroke-width="1" fill="none"/><path d="M1746.5 554.5 V559.0" stroke="#cccccc" stroke-width="1" fill="none"/><path d="M1843.5 554.5 V559.0" stroke="#cccccc" stroke-width="1" fill="none"/><path d="M1503.12 368.43 C1503.12 368.43 1557.76 426.54 1600.38 426.54 C1655.01 426.54 1659.10 318.67 1697.62 318.67 C1756.35 318.67 1794.88 517.60 1794.88 517.60" stroke="#769af2" stroke-width="2" fill="none" stroke-linejoin="round"/><path d="M1503.12 554.00 C1503.12 554.00 1551.75 537.75 1600.38 537.75 C1649.00 537.75 1649.31 554.00 1697.62 554.00 C1746.56 554.00 1794.88 531.25 1794.88 531.25" stroke="#465ca5" stroke-width="2" fill="none" stroke-linejoin="round"/><circle cx="1503.1" cy="368.4" r="3.4" fill="#769af2"/><circle cx="1600.4" cy="426.5" r="3.4" fill="#769af2"/><circle cx="1697.6" cy="318.7" r="3.4" fill="#769af2"/><circle cx="1794.9" cy="517.6" r="3.4" fill="#769af2"/><circle cx="1503.1" cy="554.0" r="3.4" fill="#465ca5"/><circle cx="1600.4" cy="537.8" r="3.4" fill="#465ca5"/><circle cx="1697.6" cy="554.0" r="3.4" fill="#465ca5"/><circle cx="1794.9" cy="531.2" r="3.4" fill="#465ca5"/><text x="1503.1" y="356.9" font-size="12.5" fill="#444444" text-anchor="middle">57,100</text><text x="1600.4" y="415.0" font-size="12.5" fill="#444444" text-anchor="middle">39,217</text><text x="1697.6" y="307.2" font-size="12.5" fill="#444444" text-anchor="middle">72,410</text><text x="1794.9" y="506.1" font-size="12.5" fill="#444444" text-anchor="middle">11,200</text><text x="1503.1" y="542.9" font-size="12.5" fill="#444444" text-anchor="middle">0</text><text x="1600.4" y="526.6" font-size="12.5" fill="#444444" text-anchor="middle">5,000</text><text x="1697.6" y="542.9" font-size="12.5" fill="#444444" text-anchor="middle">0</text><text x="1600.4" y="571.3" font-size="12.5" fill="#1c2148" text-anchor="middle">2025年02月</text><text x="1697.6" y="571.3" font-size="12.5" fill="#1c2148" text-anchor="middle">2025年05月</text><text x="1794.9" y="571.3" font-size="12.5" fill="#1c2148" text-anchor="middle">2025年09月</text><path d="M1510.2 601.4 H1521" stroke="#769af2" stroke-width="2" fill="none"/><circle cx="1515.6" cy="601.4" r="3.8" fill="#769af2"/><text x="1525.3" y="605.2" font-size="12" fill="#1c2148" text-anchor="start" letter-spacing="0.12">计划付款金额（本位币）</text><path d="M1668.2 601.4 H1679" stroke="#465ca5" stroke-width="2" fill="none"/><circle cx="1673.6" cy="601.4" r="3.8" fill="#465ca5"/><text x="1683.8" y="605.2" font-size="12" fill="#1c2148" text-anchor="start" letter-spacing="0.12">已付款金额</text></svg></div>
<div class="card" style="left:425px;top:634px;width:1448px;height:300px"><div class="ct">合同执行情况汇总</div><svg class="abs" style="left:0;top:0" width="1448" height="40" viewBox="425 634 1448 40"><circle cx="1853.1" cy="653.6" r="5.9" fill="none" stroke="#1dbf73" stroke-width="1.1"/><rect x="1852.55" y="650.50" width="1.1" height="1.2" fill="#1dbf73"/><rect x="1852.55" y="652.70" width="1.1" height="4.2" fill="#1dbf73"/></svg><div class="tbl"><div class="th c0" style="left:0px;width:167px">合同编号</div><div class="th" style="left:167px;width:201px">合同名称</div><div class="th" style="left:368px;width:161px">对方签约公司名称</div><div class="th" style="left:529px;width:133px">生效日期</div><div class="th" style="left:662px;width:141px">有效期至</div><div class="th" style="left:803px;width:113px">合同金额</div><div class="th" style="left:916px;width:99px">币种</div><div class="th" style="left:1015px;width:149px">合同金额(不含税)</div><div class="th" style="left:1164px;width:148px">计划付款金额</div><div class="th" style="left:1312px;width:153px">计划付款金额（本位币）</div><div class="td c0" style="left:0px;top:39px;width:167px"><span class="u">CG</span>202501002</div><div class="td" style="left:167px;top:39px;width:201px">2024年审计服务合同</div><div class="td" style="left:368px;top:39px;width:161px">广州商贸公司</div><div class="td" style="left:529px;top:39px;width:133px">2025-01-01</div><div class="td" style="left:662px;top:39px;width:141px">2025-12-31</div><div class="td r" style="left:803px;top:39px;width:113px">5,300</div><div class="td" style="left:916px;top:39px;width:99px"><span class="u">CNY</span></div><div class="td r" style="left:1015px;top:39px;width:149px">5,000</div><div class="td r" style="left:1164px;top:39px;width:148px">5,300</div><div class="td r" style="left:1312px;top:39px;width:153px"></div><div class="td c0" style="left:0px;top:79px;width:167px"><span class="u">CG</span>202501006</div><div class="td" style="left:167px;top:79px;width:201px">开发外包服务合同</div><div class="td" style="left:368px;top:79px;width:161px">广州商贸公司</div><div class="td" style="left:529px;top:79px;width:133px">2025-01-01</div><div class="td" style="left:662px;top:79px;width:141px">2025-12-31</div><div class="td r" style="left:803px;top:79px;width:113px">100,000</div><div class="td" style="left:916px;top:79px;width:99px"><span class="u">USD</span></div><div class="td r" style="left:1015px;top:79px;width:149px">100,000</div><div class="td r" style="left:1164px;top:79px;width:148px">15,000</div><div class="td r" style="left:1312px;top:79px;width:153px">108,000</div><div class="td c0" style="left:0px;top:119px;width:167px"><span class="u">CG</span>202502004</div><div class="td" style="left:167px;top:119px;width:201px">新项目it设备采购合同</div><div class="td" style="left:368px;top:119px;width:161px">广州商贸公司</div><div class="td" style="left:529px;top:119px;width:133px">2025-02-19</div><div class="td" style="left:662px;top:119px;width:141px">2025-09-16</div><div class="td r" style="left:803px;top:119px;width:113px">25,000</div><div class="td" style="left:916px;top:119px;width:99px"><span class="u">CNY</span></div><div class="td r" style="left:1015px;top:119px;width:149px">22,123.89</div><div class="td r" style="left:1164px;top:119px;width:148px">16,000</div><div class="td r" style="left:1312px;top:119px;width:153px"></div><div class="td c0" style="left:0px;top:159px;width:167px"><span class="u">CG</span>202505001</div><div class="td" style="left:167px;top:159px;width:201px">5月采购合同</div><div class="td" style="left:368px;top:159px;width:161px">广州商贸公司</div><div class="td" style="left:529px;top:159px;width:133px">2025-05-15</div><div class="td" style="left:662px;top:159px;width:141px">2025-06-18</div><div class="td r" style="left:803px;top:159px;width:113px">100,000</div><div class="td" style="left:916px;top:159px;width:99px"><span class="u">CNY</span></div><div class="td r" style="left:1015px;top:159px;width:149px">99,900</div><div class="td r" style="left:1164px;top:159px;width:148px">50,000</div><div class="td r" style="left:1312px;top:159px;width:153px"></div></div></div>
</body>
</html>
